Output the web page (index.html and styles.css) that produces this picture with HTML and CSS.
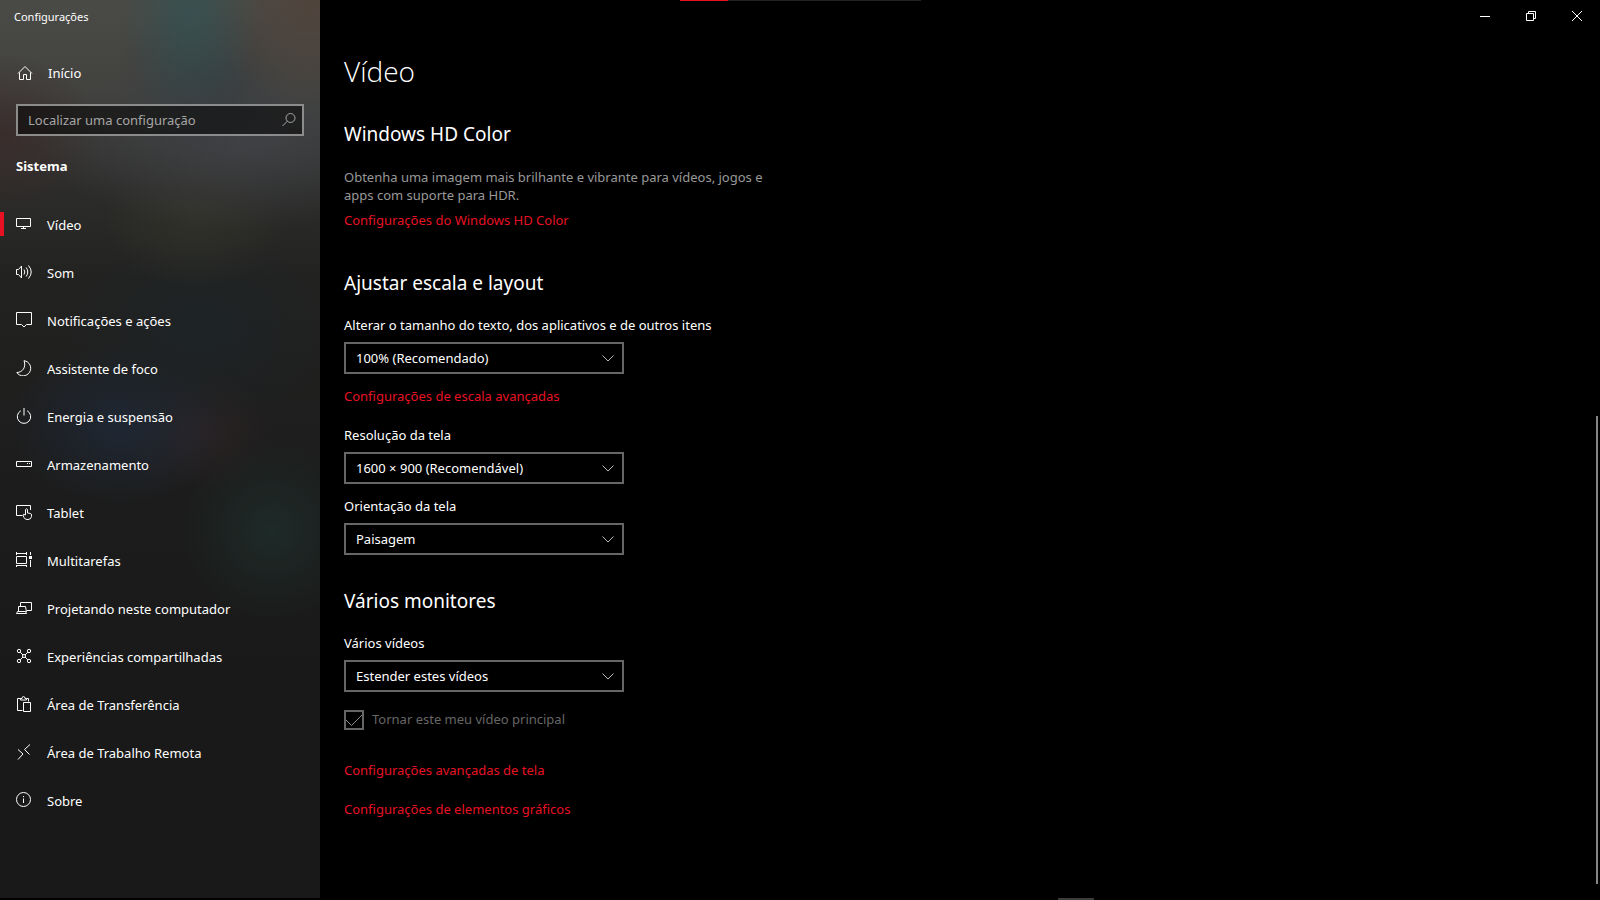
FILE: index.html
```html
<!DOCTYPE html>
<html lang="pt-BR">
  <head>
    <meta charset="utf-8">
    <title>Configurações</title>
    <link rel="stylesheet" href="styles.css">
  </head>

  <body>
    <div class="window">

      <aside class="sidebar">
        <div class="app-title">Configurações</div>

        <a class="home" href="#">
          <svg class="icon" viewBox="0 0 16 16"><path d="M1 8.5 8 1.5l7 7M2.5 7.5v7h4v-5h3v5h4v-7"/></svg>
          Início
        </a>

        <div class="search">
          <input type="text" id="search" placeholder="Localizar uma configuração" aria-label="Localizar uma configuração">
          <svg class="icon" viewBox="0 0 16 16"><circle cx="9.5" cy="6" r="4.5"/><path d="M6.3 9.2 1.5 14"/></svg>
        </div>

        <h2 class="group">Sistema</h2>

        <nav class="nav">
          <a class="nav-item active" href="#">
            <svg class="icon" viewBox="0 0 16 16"><path d="M.5 2.5h14v8H.5zM7.5 10.5v2M5 12.5h5"/></svg>
            Vídeo
          </a>
          <a class="nav-item" href="#">
            <svg class="icon" viewBox="0 0 16 16"><path d="M.5 5.5h2l3-3.5v12l-3-3.5h-2zM8 5.5q1.6 2.5 0 5M10.2 3.5q3.2 4.5 0 9M12.5 1.5q5.5 6.5 0 13"/></svg>
            Som
          </a>
          <a class="nav-item" href="#">
            <svg class="icon" viewBox="0 0 16 16"><path d="M.5.5h15v12h-5L8 15l-2.5-2.5h-5z"/></svg>
            Notificações e ações
          </a>
          <a class="nav-item" href="#">
            <svg class="icon" viewBox="0 0 16 16"><path d="M8 .7A7.6 7.6 0 1 1 .8 12.5C6.5 12.5 10.5 7 8 .7z"/></svg>
            Assistente de foco
          </a>
          <a class="nav-item" href="#">
            <svg class="icon" viewBox="0 0 16 16"><path d="M4.8 2.8a6.7 6.7 0 1 0 6.4 0M8 0v7.5"/></svg>
            Energia e suspensão
          </a>
          <a class="nav-item" href="#">
            <svg class="icon" viewBox="0 0 16 16"><path d="M.5 5.5h15v5H.5zM11 7.5h1M13 7.5h1"/></svg>
            Armazenamento
          </a>
          <a class="nav-item" href="#">
            <svg class="icon" viewBox="0 0 16 16"><path d="M6.5 11.5h-6v-10h14V6M9.5 11V5.5q1-1.5 2 0V9l3 .5q1 .3 1 1.5v1.5q-.5 3-3.5 3h-1q-2 0-3-2L7 11q0-1.5 2.5 0"/></svg>
            Tablet
          </a>
          <a class="nav-item" href="#">
            <svg class="icon" viewBox="0 0 16 16"><path d="M.5 0v3M10.5 0v3M.5 1.5h10M.5 4.5h10v7H.5zM.5 15v-2M10.5 15v-2M.5 13.5h10M14.5 0v3M14.5 8v7"/><path class="solid" d="M13 4h3v3h-3z"/></svg>
            Multitarefas
          </a>
          <a class="nav-item" href="#">
            <svg class="icon" viewBox="0 0 16 16"><path d="M4.5 6V2.5h11v8H11M2.5 12V6.5h7l1 5.5M.5 13.5h10l-1-2h-8z"/></svg>
            Projetando neste computador
          </a>
          <a class="nav-item" href="#">
            <svg class="icon" viewBox="0 0 16 16"><circle cx="3" cy="3" r="1.7"/><circle cx="13" cy="3" r="1.7"/><circle cx="3" cy="13" r="1.7"/><circle cx="13" cy="13" r="1.7"/><circle cx="8" cy="8" r="1.5"/><path d="M4.2 4.2 7 7M11.8 4.2 9 7M4.2 11.8 7 9M11.8 11.8 9 9"/></svg>
            Experiências compartilhadas
          </a>
          <a class="nav-item" href="#">
            <svg class="icon" viewBox="0 0 16 16"><path d="M6.5 14.5h-5v-12h3M10.5 2.5h2v3M4.5 4V2.5H6q0-2 1.5-2T9 2.5h1.5V4zM7.5 6.5h7v9h-7z"/></svg>
            Área de Transferência
          </a>
          <a class="nav-item" href="#">
            <svg class="icon" viewBox="0 0 16 16"><path d="M2 5.5 7 10l-5 5.5M14 .5 8.5 5.5l5 5"/></svg>
            Área de Trabalho Remota
          </a>
          <a class="nav-item" href="#">
            <svg class="icon" viewBox="0 0 16 16"><circle cx="7.5" cy="7.5" r="7"/><path d="M7.5 6.5V11M7.5 4v1.2"/></svg>
            Sobre
          </a>
        </nav>
      </aside>

      <main class="main">
        <div class="titlebar">
          <button class="win-btn" aria-label="Minimizar"><svg class="glyph" viewBox="0 0 10 10"><path d="M0 5.5h10"/></svg></button>
          <button class="win-btn" aria-label="Restaurar"><svg class="glyph" viewBox="0 0 10 10"><path d="M.5 2.5h7v7h-7zM2.5 2.5v-2h7v7h-2"/></svg></button>
          <button class="win-btn" aria-label="Fechar"><svg class="glyph" viewBox="0 0 10 10"><path d="M0 0l10 10M10 0 0 10"/></svg></button>
        </div>

        <div class="content">
          <h1>Vídeo</h1>

          <section>
            <h2>Windows HD Color</h2>
            <p class="description">Obtenha uma imagem mais brilhante e vibrante para vídeos, jogos e apps com suporte para HDR.</p>
            <a class="link" href="#">Configurações do Windows HD Color</a>
          </section>

          <section>
            <h2>Ajustar escala e layout</h2>
            <div class="field">
              <label for="scale">Alterar o tamanho do texto, dos aplicativos e de outros itens</label>
              <select id="scale"><option>100% (Recomendado)</option></select>
            </div>
            <a class="link spaced" href="#">Configurações de escala avançadas</a>
            <div class="field">
              <label for="resolution">Resolução da tela</label>
              <select id="resolution"><option>1600 × 900 (Recomendável)</option></select>
            </div>
            <div class="field">
              <label for="orientation">Orientação da tela</label>
              <select id="orientation"><option>Paisagem</option></select>
            </div>
          </section>

          <section>
            <h2>Vários monitores</h2>
            <div class="field">
              <label for="displays">Vários vídeos</label>
              <select id="displays"><option>Estender estes vídeos</option></select>
            </div>
            <div class="check">
              <input type="checkbox" id="main-display" checked disabled>
              <label for="main-display">Tornar este meu vídeo principal</label>
            </div>
            <div class="links">
              <a class="link" href="#">Configurações avançadas de tela</a>
              <a class="link" href="#">Configurações de elementos gráficos</a>
            </div>
          </section>
        </div>
      </main>

      <!-- overlays on the window edges -->
      <div class="progress"></div>
      <div class="scrollbar"></div>
      <div class="edge"></div>
    </div>
  </body>
</html>
```

FILE: styles.css
```css
* {
  box-sizing: border-box;
}

body {
  margin: 0;
  background: #000000;
  color: #ffffff;
  font-family: "Noto Sans", "Open Sans", sans-serif;
  font-size: 13px;
  line-height: 18px;
}

a {
  color: inherit;
  text-decoration: none;
}

h1, h2, p {
  margin: 0;
}

.window {
  position: relative;
  display: grid;
  grid-template-columns: 320px 1fr;
  min-height: 100vh;
  padding-bottom: 2px;
}

/* sidebar */

.sidebar {
  background:
    radial-gradient(ellipse 70px 110px at 190px 10px, rgba(50, 84, 84, 0.7), transparent),
    radial-gradient(ellipse 100px 110px at 310px 0, rgba(82, 66, 56, 0.7), transparent),
    radial-gradient(ellipse 90px 80px at 205px 80px, rgba(52, 58, 62, 0.7), transparent),
    radial-gradient(ellipse 200px 90px at 240px 140px, rgba(68, 70, 76, 0.7), transparent),
    radial-gradient(ellipse 100px 80px at 0 135px, rgba(58, 40, 40, 0.7), transparent),
    radial-gradient(ellipse 90px 70px at 195px 220px, rgba(54, 54, 44, 0.6), transparent),
    radial-gradient(ellipse 130px 100px at 200px 330px, rgba(28, 36, 40, 0.7), transparent),
    radial-gradient(ellipse 110px 80px at 120px 425px, rgba(30, 40, 54, 0.9), transparent),
    radial-gradient(ellipse 80px 60px at 195px 430px, rgba(46, 36, 37, 0.8), transparent),
    radial-gradient(ellipse 90px 90px at 272px 530px, rgba(30, 44, 41, 0.9), transparent),
    linear-gradient(#4a4a46 0, #42423f 90px, #2c2c2a 190px, #222221 280px, #1c1c1c 500px, #191919 700px);
}

.app-title {
  padding: 8px 14px;
  font-size: 11px;
}

.home {
  display: flex;
  align-items: center;
  gap: 15px;
  height: 48px;
  margin-top: 15px;
  padding: 0 17px;
}

.icon {
  flex: none;
  width: 16px;
  height: 16px;
  fill: none;
  stroke: #ffffff;
}

.icon .solid {
  fill: #ffffff;
  stroke: none;
}

.search {
  display: flex;
  align-items: center;
  height: 32px;
  margin: 7px 16px 0;
  padding: 0 5px 0 10px;
  border: 2px solid #8c8c8c;
  background: rgba(0, 0, 0, 0.5);
}

.search input {
  flex: 1;
  min-width: 0;
  padding: 0;
  border: 0;
  outline: 0;
  background: none;
  color: #ffffff;
  font: inherit;
}

.search input::placeholder {
  color: #a6a6a6;
  opacity: 1;
}

.search .icon {
  stroke: #a6a6a6;
}

.group {
  padding: 21px 16px 25px;
  font-size: 13px;
  font-weight: 700;
}

.nav-item {
  display: flex;
  align-items: center;
  gap: 15px;
  height: 48px;
  padding: 1px 16px 0;
}

.nav-item .icon {
  margin-bottom: 1px;
}

.nav-item.active {
  background: linear-gradient(#e81123, #e81123) left center / 4px 24px no-repeat;
}

/* main area */

.titlebar {
  display: flex;
  justify-content: flex-end;
}

.win-btn {
  display: flex;
  align-items: center;
  justify-content: center;
  width: 46px;
  height: 32px;
  padding: 0;
  border: 0;
  background: none;
}

.glyph {
  width: 10px;
  height: 10px;
  fill: none;
  stroke: #ffffff;
}

.content {
  padding: 21px 24px;
}

h1 {
  font-family: "Open Sans", sans-serif;
  font-size: 28px;
  font-weight: 300;
  line-height: 36px;
}

section {
  margin-top: 32px;
}

h1 + section {
  margin-top: 31px;
}

section h2 {
  margin-bottom: 19px;
  font-size: 19px;
  font-weight: 400;
  line-height: 28px;
}

.description {
  max-width: 432px;
  padding-top: 1px;
  margin-bottom: 7px;
  color: #999999;
}

.link {
  display: block;
  width: fit-content;
  color: #e81123;
}

.link:last-child {
  margin-bottom: 40px;
}

.link.spaced {
  margin: 13px 0 21px;
}

.field {
  display: flex;
  flex-direction: column;
  gap: 8px;
}

.field + .field {
  margin-top: 13px;
}

select {
  appearance: none;
  width: 280px;
  height: 32px;
  padding: 0 10px;
  border: 2px solid #666666;
  border-radius: 0;
  background: url("data:image/svg+xml,%3Csvg xmlns='http://www.w3.org/2000/svg' width='12' height='7'%3E%3Cpath d='M.5 .5 6 6 11.5 .5' fill='none' stroke='%23bbbbbb'/%3E%3C/svg%3E") right 8px center no-repeat;
  color: #ffffff;
  font: inherit;
}

.check {
  display: flex;
  gap: 8px;
  margin-top: 18px;
  color: #666666;
}

.check input {
  appearance: none;
  width: 20px;
  height: 20px;
  margin: 0;
  border: 2px solid #666666;
  background: url("data:image/svg+xml,%3Csvg xmlns='http://www.w3.org/2000/svg' width='16' height='16'%3E%3Cpath d='M0 8l5.5 5.5L16 3' fill='none' stroke='%23888888'/%3E%3C/svg%3E") center no-repeat;
}

.links {
  display: flex;
  flex-direction: column;
  gap: 21px;
  margin-top: 31px;
}

/* overlays */

.progress {
  position: absolute;
  top: 0;
  left: 680px;
  width: 241px;
  height: 1px;
  background: linear-gradient(90deg, #e81123 48px, #222222 48px);
}

.scrollbar {
  position: absolute;
  top: 416px;
  right: 2px;
  bottom: 16px;
  width: 2px;
  background: #858585;
}

.edge {
  position: absolute;
  left: 1058px;
  bottom: 0;
  width: 36px;
  height: 2px;
  background: #3c3c3c;
}
```
